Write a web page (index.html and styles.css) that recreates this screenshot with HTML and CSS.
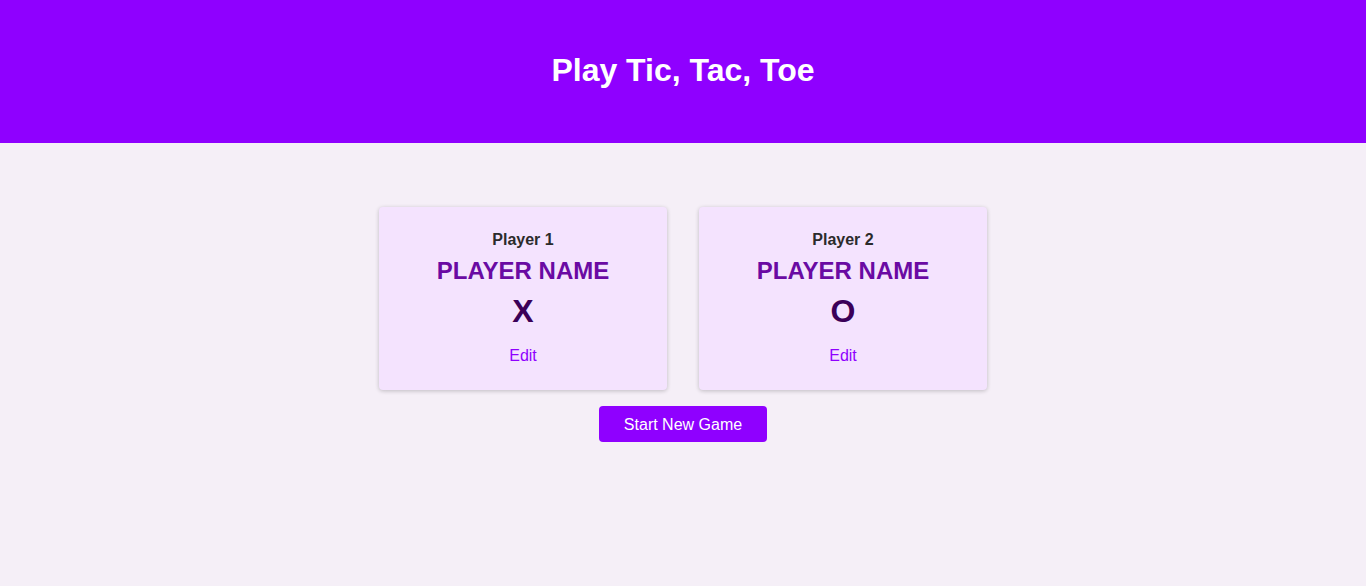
FILE: index.html
```html
<!DOCTYPE html>
<html lang="en">
<head>
<meta charset="utf-8">
<title>Tic Tac Toe</title>
<link rel="stylesheet" href="styles.css">
</head>
<body>
<header class="main-header">
  <h1 class="title">Play Tic, Tac, Toe</h1>
</header>
<main class="content">
  <ol class="players">
    <li class="player-card">
      <h2 class="player-label">Player 1</h2>
      <h3 class="player-name">PLAYER NAME</h3>
      <p class="player-symbol">X</p>
      <button class="edit-btn">Edit</button>
    </li>
    <li class="player-card">
      <h2 class="player-label">Player 2</h2>
      <h3 class="player-name">PLAYER NAME</h3>
      <p class="player-symbol">O</p>
      <button class="edit-btn">Edit</button>
    </li>
  </ol>
  <button class="start-btn">Start New Game</button>
</main>
</body>
</html>
```
FILE: styles.css
```css
* { box-sizing: border-box; }
html, body { margin: 0; padding: 0; }
body {
  font-family: "Liberation Sans", Arial, sans-serif;
  background: #f5eff7;
  min-height: 586px;
}
.main-header {
  background: #8f00ff;
  height: 143px;
  display: flex;
  align-items: center;
  justify-content: center;
}
.title {
  margin: 0;
  color: #ffffff;
  font-size: 32px;
  line-height: 37px;
  font-weight: 700;
  padding-bottom: 2px;
}
.content {
  display: flex;
  flex-direction: column;
  align-items: center;
  padding-top: 64px;
}
.players {
  list-style: none;
  margin: 0;
  padding: 0;
  display: flex;
  gap: 32px;
}
.player-card {
  width: 288px;
  height: 183px;
  background: #f4e3fe;
  border-radius: 4px;
  box-shadow: 0 1px 4px rgba(0, 0, 0, 0.22);
  display: flex;
  flex-direction: column;
  align-items: center;
  padding-top: 24px;
}
.player-label {
  margin: 0;
  font-size: 16px;
  line-height: 18px;
  font-weight: 700;
  color: #2b2b2b;
}
.player-name {
  margin: 8px 0 0;
  font-size: 24px;
  line-height: 28px;
  font-weight: 700;
  color: #6a0aa3;
}
.player-symbol {
  margin: 8px 0 0;
  font-size: 32px;
  line-height: 37px;
  font-weight: 700;
  color: #3b0058;
}
.edit-btn {
  margin-top: 17px;
  background: none;
  border: none;
  padding: 0;
  font-family: inherit;
  font-size: 16px;
  line-height: 18px;
  color: #8f00ff;
  cursor: pointer;
}
.start-btn {
  margin-top: 16px;
  width: 168px;
  height: 36px;
  background: #8f00ff;
  color: #ffffff;
  border: none;
  border-radius: 4px;
  font-family: inherit;
  font-size: 16px;
  line-height: 19px;
  padding: 0;
  cursor: pointer;
}
```
